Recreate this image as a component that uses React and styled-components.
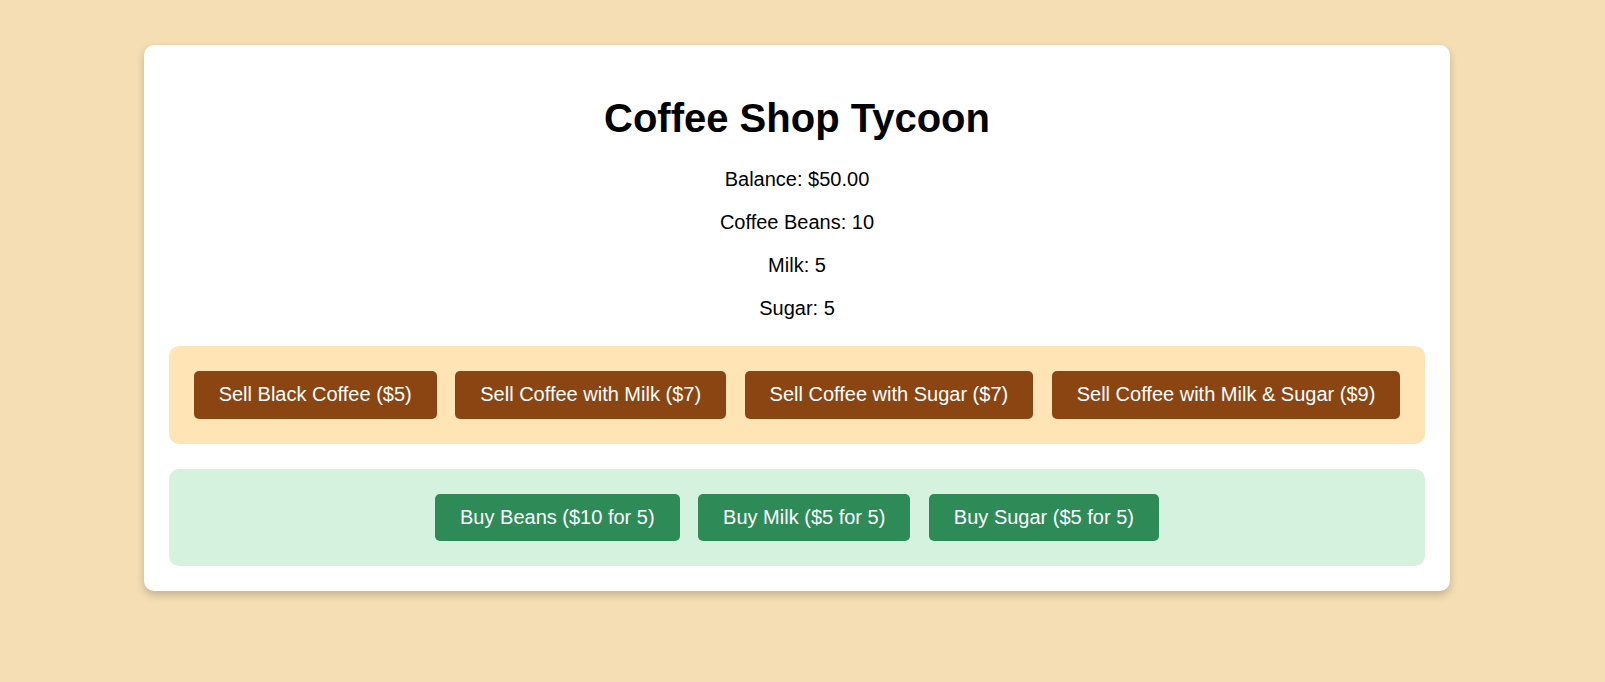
import React, { useState } from 'react'
import styled, { createGlobalStyle } from 'styled-components'

const GlobalStyle = createGlobalStyle`
  body {
    margin: 0;
    background-color: #f5deb3;
    font-family: "Liberation Sans", Arial, sans-serif;
  }
`

const sellOptions = [
  { label: 'Sell Black Coffee ($5)', price: 5, milk: 0, sugar: 0 },
  { label: 'Sell Coffee with Milk ($7)', price: 7, milk: 1, sugar: 0 },
  { label: 'Sell Coffee with Sugar ($7)', price: 7, milk: 0, sugar: 1 },
  { label: 'Sell Coffee with Milk & Sugar ($9)', price: 9, milk: 1, sugar: 1 },
]

const buyOptions = [
  { label: 'Buy Beans ($10 for 5)', key: 'beans', cost: 10 },
  { label: 'Buy Milk ($5 for 5)', key: 'milk', cost: 5 },
  { label: 'Buy Sugar ($5 for 5)', key: 'sugar', cost: 5 },
]

function App() {
  const [balance, setBalance] = useState(50)
  const [stock, setStock] = useState({ beans: 10, milk: 5, sugar: 5 })

  const sell = (opt) => {
    if (stock.beans < 1 || stock.milk < opt.milk || stock.sugar < opt.sugar) return
    setStock({
      beans: stock.beans - 1,
      milk: stock.milk - opt.milk,
      sugar: stock.sugar - opt.sugar,
    })
    setBalance(balance + opt.price)
  }

  const buy = (opt) => {
    if (balance < opt.cost) return
    setBalance(balance - opt.cost)
    setStock({ ...stock, [opt.key]: stock[opt.key] + 5 })
  }

  return (
    <Page>
      <GlobalStyle />
      <Card>
        <Title>Coffee Shop Tycoon</Title>
        <Stats>
          <Stat>Balance: ${balance.toFixed(2)}</Stat>
          <Stat>Coffee Beans: {stock.beans}</Stat>
          <Stat>Milk: {stock.milk}</Stat>
          <Stat>Sugar: {stock.sugar}</Stat>
        </Stats>
        <Panel $tone="sell">
          {sellOptions.map(opt => (
            <ActionButton key={opt.label} $tone="sell" onClick={() => sell(opt)}>
              {opt.label}
            </ActionButton>
          ))}
        </Panel>
        <Panel $tone="buy">
          {buyOptions.map(opt => (
            <ActionButton key={opt.label} $tone="buy" onClick={() => buy(opt)}>
              {opt.label}
            </ActionButton>
          ))}
        </Panel>
      </Card>
    </Page>
  )
}

const Page = styled.div`
  min-height: 100vh;
  padding: 45px 155px 45px 144px;
  box-sizing: border-box;
`

const Card = styled.div`
  background: #ffffff;
  border-radius: 10px;
  box-shadow: 0 4px 8px rgba(0, 0, 0, 0.2);
  padding: 25px;
  display: flex;
  flex-direction: column;
  gap: 25px;
`

const Title = styled.h1`
  margin: 25px 0 2px;
  font-size: 40px;
  line-height: 46px;
  font-weight: bold;
  text-align: center;
  color: #000;
`

const Stats = styled.div`
  display: flex;
  flex-direction: column;
  align-items: center;
  gap: 20px;
  margin-bottom: 1px;
`

const Stat = styled.p`
  margin: 0;
  font-size: 20px;
  line-height: 23px;
  color: #000;
`

const Panel = styled.div`
  display: flex;
  justify-content: center;
  gap: 18.5px;
  padding: 25px;
  border-radius: 10px;
  background: ${p => (p.$tone === 'sell' ? '#ffe4b5' : '#d5f2de')};
`

const ActionButton = styled.button`
  flex: none;
  padding: 12px 25px;
  font-family: "Liberation Sans", Arial, sans-serif;
  font-size: 20px;
  line-height: 23.5px;
  color: #fff;
  border: none;
  border-radius: 5px;
  cursor: pointer;
  white-space: nowrap;
  background: ${p => (p.$tone === 'sell' ? '#8b4513' : '#2e8b57')};
`

export default App
